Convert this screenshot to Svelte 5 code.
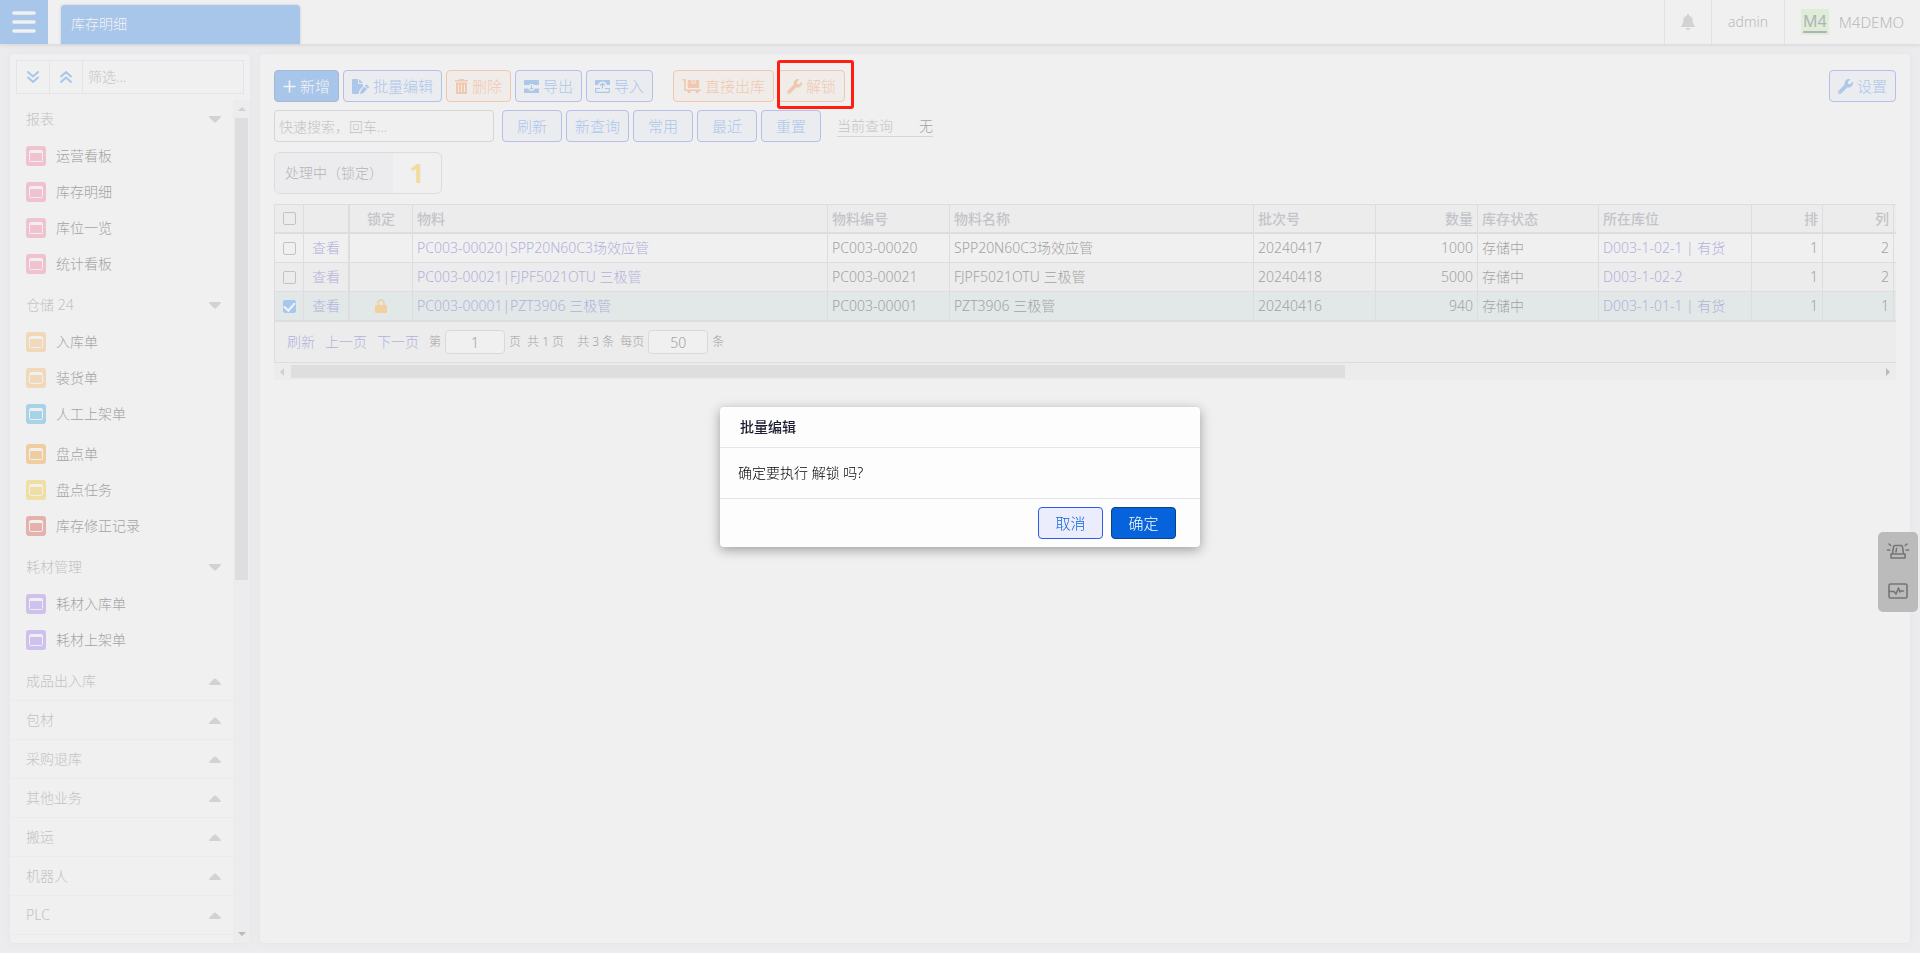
<script>
  const menu = [
    {
      title: '报表',
      blocks: [
        [
          { name: '运营看板', color: '#f0c2d0' },
          { name: '库存明细', color: '#f0c2d0' },
          { name: '库位一览', color: '#f0c2d0' },
          { name: '统计看板', color: '#f0c2d0' },
        ],
      ],
    },
    {
      title: '仓储 24',
      blocks: [
        [
          { name: '入库单', color: '#f1d8b9' },
          { name: '装货单', color: '#f1d8b9' },
          { name: '人工上架单', color: '#a7d3e9' },
        ],
        [
          { name: '盘点单', color: '#f0cda1' },
          { name: '盘点任务', color: '#f0dea2' },
          { name: '库存修正记录', color: '#e4b1ac' },
        ],
      ],
    },
    {
      title: '耗材管理',
      blocks: [
        [
          { name: '耗材入库单', color: '#cfc1ee' },
          { name: '耗材上架单', color: '#cfc1ee' },
        ],
      ],
    },
    { title: '成品出入库' },
    { title: '包材' },
    { title: '采购退库' },
    { title: '其他业务' },
    { title: '搬运' },
    { title: '机器人' },
    { title: 'PLC' },
  ];

  const queries = ['刷新', '新查询', '常用', '最近', '重置'];

  let rows = $state([
    { checked: false, locked: false, code: 'PC003-00020', name: 'SPP20N60C3场效应管', batch: '20240417', qty: 1000, place: 'D003-1-02-1 | 有货', row: 1, col: 2 },
    { checked: false, locked: false, code: 'PC003-00021', name: 'FJPF5021OTU 三极管', batch: '20240418', qty: 5000, place: 'D003-1-02-2', row: 1, col: 2 },
    { checked: true, locked: true, code: 'PC003-00001', name: 'PZT3906 三极管', batch: '20240416', qty: 940, place: 'D003-1-01-1 | 有货', row: 1, col: 1 },
  ]);

  let page = $state('1');
  let pageSize = $state('50');
  let dialogOpen = $state(true);
</script>

{#snippet wrench()}
  <svg width="15" height="15" viewBox="0 0 512 512" fill="currentColor"><path d="M507.73 109.1c-2.24-9.03-13.54-12.09-20.12-5.51l-74.36 74.36-67.88-11.31-11.31-67.88 74.36-74.36c6.62-6.62 3.43-17.9-5.66-20.16-47.38-11.74-99.55.91-136.58 37.93-39.64 39.64-50.55 97.1-34.05 147.2L18.74 402.76c-24.99 24.99-24.99 65.51 0 90.5 24.99 24.99 65.51 24.99 90.5 0l213.21-213.21c50.12 16.71 107.47 5.68 147.37-34.22 37.07-37.07 49.7-89.32 37.91-136.73zM64 472c-13.25 0-24-10.75-24-24 0-13.26 10.75-24 24-24s24 10.74 24 24c0 13.25-10.75 24-24 24z" /></svg>
{/snippet}

<div class="app">
  <header class="topbar">
    <button class="burger" aria-label="菜单">
      <svg width="24" height="22" viewBox="0 0 24 22" fill="none" stroke="#f0f0f0" stroke-width="3.6" stroke-linecap="round"><path d="M2 2h20M2 11h20M2 20h20" /></svg>
    </button>
    <a class="tab" href="#stock">库存明细</a>
    <div class="user">
      <button class="cell" aria-label="通知">
        <svg width="14" height="16" viewBox="0 0 14 16" fill="#d2d2d3"><path d="M7 0c.6 0 1 .4 1 1v.7c2.200.4 3.700 2.200 3.700 4.500 0 3 .9 4.200 1.900 5.200.7.7.3 1.700-.6 1.700H1c-.9 0-1.300-1-.6-1.700 1-1 1.900-2.200 1.900-5.200 0-2.300 1.500-4.100 3.700-4.500V1c0-.6.400-1 1-1zM5 14h4c0 1.200-.9 2-2 2s-2-.8-2-2z" /></svg>
      </button>
      <a class="cell name" href="#admin">admin</a>
      <a class="cell brand" href="#home"><span class="logo">M4</span>M4DEMO</a>
    </div>
  </header>

  <div class="body">
    <aside class="sidebar">
      <div class="filter">
        <button aria-label="全部展开">
          <svg width="14" height="14" viewBox="0 0 14 14" fill="none" stroke="#a8c6ea" stroke-width="2" stroke-linecap="round" stroke-linejoin="round"><path d="M2 2l5 4.500L12 2M2 7.500l5 4.500 5-4.500" /></svg>
        </button>
        <button aria-label="全部收起">
          <svg width="14" height="14" viewBox="0 0 14 14" fill="none" stroke="#a8c6ea" stroke-width="2" stroke-linecap="round" stroke-linejoin="round"><path d="M2 6.500L7 2l5 4.500M2 12l5-4.500 5 4.500" /></svg>
        </button>
        <input type="text" placeholder="筛选..." aria-label="筛选" />
      </div>
      <div class="menu-wrap">
        <nav class="menu">
          {#each menu as group}
            <button class="group" class:closed={!group.blocks}>
              {group.title}
              {#if group.blocks}
                <svg width="12" height="7" viewBox="0 0 12 7" fill="#d2d2d3"><path d="M1 0h10c1 0 1.200 1 .6 1.600L7.200 6c-.7.8-1.700.8-2.400 0L.4 1.600C-.2 1 0 0 1 0z" /></svg>
              {:else}
                <svg width="12" height="7" viewBox="0 0 12 7" fill="#d2d2d3"><path d="M1 7h10c1 0 1.200-1 .6-1.600L7.200 1c-.7-.8-1.700-.8-2.400 0L.4 5.400C-.2 6 0 7 1 7z" /></svg>
              {/if}
            </button>
            {#each group.blocks ?? [] as block}
              <div class="block">
                {#each block as item}
                  <a class="item" href="#{item.name}">
                    <svg width="20" height="20" viewBox="0 0 20 20">
                      <rect width="20" height="20" rx="3" fill={item.color} />
                      <rect x="3.500" y="4.500" width="13" height="11" rx="1" fill="none" stroke="#f0f0f0" />
                      <path d="M4 6h12" stroke="#f0f0f0" stroke-width="2" />
                    </svg>
                    {item.name}
                  </a>
                {/each}
              </div>
            {/each}
          {/each}
        </nav>
        <div class="vscroll">
          <svg width="8" height="4" viewBox="0 0 8 4" fill="#cfcfcf"><path d="M0 4l4-4 4 4z" /></svg>
          <div class="vtrack"><div class="vthumb"></div></div>
          <svg width="8" height="4" viewBox="0 0 8 4" fill="#b9b9b9"><path d="M0 0l4 4 4-4z" /></svg>
        </div>
      </div>
    </aside>

    <main class="content">
      <div class="toolbar">
        <button class="btn primary">
          <svg width="13" height="13" viewBox="0 0 13 13" stroke="currentColor" stroke-width="1.600" stroke-linecap="round"><path d="M6.500 1v11M1 6.500h11" /></svg>
          新增
        </button>
        <button class="btn">
          <svg width="17" height="15" viewBox="0 0 17 15" fill="currentColor"><path d="M1.300 0H6v4.200c0 .5.300.8.800.8H11v2.600L7.500 11l-.8 3.200.2.800H1.300C.5 15 0 14.500 0 13.700V1.300C0 .5.500 0 1.300 0zM7 0l4 4H7zM14.700 5.500l2 2c.4.4.4.800 0 1.200l-.9.9-2.900-2.900.9-.9c.3-.4.600-.5.900-.3zM12.200 7.400l2.900 2.900-4 4-3.100.7.6-3z" /></svg>
          批量编辑
        </button>
        <button class="btn danger">
          <svg width="13" height="15" viewBox="0 0 13 15" fill="currentColor"><path fill-rule="evenodd" d="M4.500 0h4l.6 1H13v1.500H0V1h3.900zM1 3.500h11V14c0 .6-.4 1-1 1H2c-.6 0-1-.4-1-1zM3 5.500v7.500h1V5.500zM6 5.500v7.500h1V5.500zM9 5.500v7.500h1V5.500z" /></svg>
          删除
        </button>
        <button class="btn">
          <svg width="15" height="13" viewBox="0 0 15 13" fill="currentColor"><path d="M1 0h13c.6 0 1 .4 1 1v3.500c0 .3-.2.500-.5.500H10L9 4H6L5 5H.5C.2 5 0 4.800 0 4.500V1c0-.6.400-1 1-1zM.5 8.500H4L6.300 11h2.400L11 8.500h3.500c.3 0 .5.200.5.500v3c0 .6-.4 1-1 1H1c-.6 0-1-.4-1-1V9c0-.3.2-.5.5-.5zM7 5h1v3h1.700L7.500 10 5.300 8H7z" /></svg>
          导出
        </button>
        <button class="btn">
          <svg width="15" height="13" viewBox="0 0 15 13"><path fill="currentColor" d="M1 0h13c.6 0 1 .4 1 1v3.500c0 .3-.2.500-.5.500H12C11.500 3 9.700 1.500 7.500 1.500S3.500 3 3 5H.5C.2 5 0 4.800 0 4.500V1c0-.6.400-1 1-1z" /><path d="M7.500 3.500v5M5.200 5.500l2.300-2.200 2.300 2.200M5 8.500H1.200c-.4 0-.6.200-.6.600v2.700c0 .4.200.6.600.6h12.600c.4 0 .6-.2.600-.6V9.100c0-.4-.2-.6-.6-.6H10" fill="none" stroke="currentColor" stroke-width="1.200" /></svg>
          导入
        </button>
        <button class="btn danger split">
          <svg width="19" height="15" viewBox="0 0 19 15" fill="currentColor"><path d="M.8 0h2.200c.5 0 .8.300.8.800V10.500h14.400c1 0 1 1.500 0 1.500h-1.400a1.600 1.600 0 1 1-3 0H8.600a1.600 1.600 0 1 1-3 0H3c-.5 0-.8-.3-.8-.8V1.500H.8C-.2 1.500-.2 0 .8 0zM6.500 1h3v3.500h4V1h3c.4 0 .7.300.7.700v6.600c0 .4-.3.700-.7.700h-10c-.4 0-.7-.3-.7-.7V1.700c0-.4.300-.7.700-.7zM10.500 1h2v2.500h-2z" /></svg>
          直接出库
        </button>
        <button class="btn danger marked">{@render wrench()}解锁</button>
        <button class="btn settings">{@render wrench()}设置</button>
      </div>

      <div class="toolbar">
        <input class="search" type="text" placeholder="快速搜索，回车..." aria-label="快速搜索" />
        {#each queries as query}
          <button class="btn">{query}</button>
        {/each}
        <div class="current"><span>当前查询</span><b>无</b></div>
      </div>

      <div class="stat">
        <span class="stat-name">处理中（锁定）</span>
        <strong>1</strong>
      </div>

      <div class="grid">
        <table>
          <colgroup>
            <col class="c-check" /><col class="c-view" /><col class="c-lock" /><col /><col class="c-code" /><col class="c-name" />
            <col class="c-code" /><col class="c-qty" /><col class="c-state" /><col class="c-place" /><col class="c-num" /><col class="c-num" /><col class="c-rest" />
          </colgroup>
          <thead>
            <tr>
              <th class="center"><input type="checkbox" aria-label="全选" /></th>
              <th class="thick"></th>
              <th class="center">锁定</th>
              <th>物料</th>
              <th>物料编号</th>
              <th>物料名称</th>
              <th>批次号</th>
              <th class="num">数量</th>
              <th>库存状态</th>
              <th>所在库位</th>
              <th class="num">排</th>
              <th class="num">列</th>
              <th></th>
            </tr>
          </thead>
          <tbody>
            {#each rows as row}
              <tr class:selected={row.checked}>
                <td class="center"><input type="checkbox" bind:checked={row.checked} aria-label={row.code} /></td>
                <td class="center thick"><a href="#{row.code}">查看</a></td>
                <td class="center">
                  {#if row.locked}
                    <svg class="lock" width="12" height="14" viewBox="0 0 12 14"><path d="M3 7V4a3 3 0 0 1 6 0v3" fill="none" stroke="#f0cfa0" stroke-width="1.600" /><rect y="6" width="12" height="8" rx="1" fill="#f0cfa0" /></svg>
                  {/if}
                </td>
                <td><a href="#{row.code}">{row.code}|{row.name}</a></td>
                <td>{row.code}</td>
                <td>{row.name}</td>
                <td>{row.batch}</td>
                <td class="num">{row.qty}</td>
                <td>存储中</td>
                <td><a href="#{row.place}">{row.place}</a></td>
                <td class="num">{row.row}</td>
                <td class="num">{row.col}</td>
                <td></td>
              </tr>
            {/each}
          </tbody>
        </table>
        <div class="pager">
          <a href="#refresh">刷新</a>
          <a href="#prev">上一页</a>
          <a href="#next">下一页</a>
          <label>第<input type="text" bind:value={page} />页</label>
          <span class="total">共 1 页</span>
          <span class="count">共 3 条</span>
          <label class="size">每页<input type="text" bind:value={pageSize} />条</label>
        </div>
      </div>
      <div class="hscroll">
        <svg width="4" height="8" viewBox="0 0 4 8" fill="#cfcfcf"><path d="M4 0L0 4l4 4z" /></svg>
        <div class="htrack"><div class="hthumb"></div></div>
        <svg width="4" height="8" viewBox="0 0 4 8" fill="#b9b9b9"><path d="M0 0l4 4-4 4z" /></svg>
      </div>
    </main>
  </div>

  <div class="float">
    <button aria-label="报警">
      <svg width="24" height="18" viewBox="0 0 24 18" fill="none" stroke="#757575" stroke-width="1.600" stroke-linecap="round" stroke-linejoin="round"><path d="M6.500 11.500L7.500 5c.1-.9.700-1.500 1.500-1.500h6c.8 0 1.400.6 1.500 1.500l1 6.500M5 12h14v4H5zM10.500 6.500L10 10M1.500 8h2.300M20.200 8h2.300M3 2l1.800 1.500M21 2l-1.800 1.500" /></svg>
    </button>
    <button aria-label="监控">
      <svg width="20" height="16" viewBox="0 0 20 16" fill="none" stroke="#757575" stroke-width="1.600" stroke-linecap="round" stroke-linejoin="round"><rect x="1" y="1" width="18" height="14" rx="1.500" /><path d="M1.500 8.500H6l2 2.500 2.500-6L12 9l1-1h2.500" /></svg>
    </button>
  </div>

  {#if dialogOpen}
    <div class="mask">
      <div class="dialog" role="dialog" aria-labelledby="dialog-title">
        <h2 id="dialog-title">批量编辑</h2>
        <p>确定要执行 解锁 吗?</p>
        <footer>
          <button class="cancel" onclick={() => (dialogOpen = false)}>取消</button>
          <button class="ok" onclick={() => (dialogOpen = false)}>确定</button>
        </footer>
      </div>
    </div>
  {/if}
</div>

<style>
  :global(body) {
    margin: 0;
    background: #ecebed;
  }

  .app,
  .app * {
    box-sizing: border-box;
  }

  .app {
    display: flex;
    flex-direction: column;
    height: 100vh;
    overflow: hidden;
    font: 300 14px/20px "Noto Sans", "Noto Sans CJK SC", sans-serif;
    color: #a3a3a3;
  }

  button,
  input {
    font: inherit;
    color: inherit;
    margin: 0;
  }

  button {
    padding: 0;
    border: 0;
    background: none;
    cursor: pointer;
  }

  input {
    min-width: 0;
    outline: none;
  }

  input::placeholder {
    color: #c3c3c3;
    opacity: 1;
  }

  a {
    color: #b3b1dc;
    text-decoration: none;
  }

  svg {
    flex: none;
    display: block;
  }

  .topbar {
    display: flex;
    flex: none;
    height: 44px;
    background: #f0f0f0;
    box-shadow: 0 1px 4px #d3d4d8;
  }

  .burger {
    display: grid;
    place-items: center;
    width: 48px;
    background: #a8c5ea;
  }

  .tab {
    width: 239px;
    margin: 5px 0 0 13px;
    padding: 9px 10px;
    border-radius: 4px 4px 0 0;
    background: #a8c5ea;
    box-shadow: 0 0 3px #c5c9d4;
    color: #f4f4f4;
  }

  .user {
    display: flex;
    margin-left: auto;
  }

  .cell {
    display: flex;
    align-items: center;
    padding: 0 16px;
    border-left: 1px solid #e2e2e4;
    color: #b9b9bb;
    font-size: 15px;
  }

  .name {
    font-size: 14px;
  }

  .brand {
    gap: 10px;
  }

  .logo {
    height: 26px;
    padding: 2px 2px;
    background: #e1ecd7;
    color: #acb4ba;
    font-size: 16px;
    font-weight: 400;
    line-height: 20px;
    text-decoration: underline;
    text-decoration-thickness: 2px;
    text-underline-offset: 4px;
  }

  .body {
    display: flex;
    flex: 1;
    min-height: 0;
    gap: 10px;
    padding: 10px;
  }

  .sidebar,
  .content {
    border-radius: 4px;
    background: #f0f0f0;
    box-shadow: 0 0 6px #e3e4e8;
  }

  .sidebar {
    display: flex;
    flex-direction: column;
    gap: 6px;
    width: 240px;
    padding-top: 6px;
  }

  .filter {
    display: flex;
    flex: none;
    height: 34px;
    margin: 0 6px;
    border: 1px solid #e4e4e6;
  }

  .filter button {
    display: grid;
    place-items: center;
    width: 33px;
    border-right: 1px solid #e4e4e6;
  }

  .filter input {
    flex: 1;
    padding: 0 5px;
    border: 0;
    background: none;
  }

  .menu-wrap {
    display: flex;
    flex: 1;
    min-height: 0;
  }

  .menu {
    flex: 1;
    overflow: hidden;
  }

  .group {
    display: flex;
    align-items: center;
    justify-content: space-between;
    width: 100%;
    height: 38px;
    padding: 0 12px 0 16px;
    color: #c3c3c3;
  }

  .group.closed {
    height: 39px;
    border-bottom: 1px solid #ebebec;
  }

  .block {
    padding-bottom: 4px;
  }

  .item {
    display: flex;
    align-items: center;
    gap: 10px;
    height: 36px;
    padding-left: 16px;
    color: #a3a3a3;
  }

  .vscroll {
    display: flex;
    flex-direction: column;
    align-items: center;
    gap: 7px;
    width: 17px;
    padding: 7px 0;
    background: #ececec;
  }

  .vtrack {
    flex: 1;
    width: 13px;
  }

  .vthumb {
    height: 57.3%;
    background: #dedede;
  }

  .content {
    flex: 1;
    min-width: 0;
    padding: 16px 14px;
  }

  .toolbar {
    display: flex;
    gap: 4px;
    margin-bottom: 8px;
  }

  .btn {
    position: relative;
    display: flex;
    align-items: center;
    justify-content: center;
    gap: 4px;
    min-width: 60px;
    height: 32px;
    padding: 0 8px;
    border: 1px solid #b5bfea;
    border-radius: 4px;
    background: #ebecf0;
    color: #abc7ea;
    font-size: 15px;
    white-space: nowrap;
  }

  .primary {
    border-color: #a5b8d0;
    background: #a8c5ea;
    color: #f4f4f4;
  }

  .danger {
    border-color: #f0c8b0;
    background: #f0ece9;
    color: #f0c8b0;
  }

  .split {
    margin-left: 16px;
  }

  .settings {
    margin-left: auto;
  }

  .marked::after {
    content: '';
    position: absolute;
    inset: -11px -10px -8px -2px;
    border: 3px solid #ff1e12;
    border-radius: 3px;
  }

  .search {
    width: 220px;
    height: 32px;
    margin-right: 4px;
    padding: 0 4px;
    border: 1px solid #d5d5d5;
    border-radius: 4px;
    background: none;
  }

  .current {
    display: flex;
    align-self: center;
    gap: 26px;
    margin-left: 12px;
    border-bottom: 1px solid #d5d5d5;
    color: #c3c3c3;
  }

  .current b {
    color: #a3a3a3;
    font-weight: 300;
  }

  .stat {
    display: inline-flex;
    height: 42px;
    margin: 2px 0 10px;
    border: 1px solid #dcdcde;
    border-radius: 6px;
    line-height: 40px;
    vertical-align: top;
  }

  .stat-name {
    width: 118px;
    padding-left: 10px;
    border-radius: 5px 0 0 5px;
    background: #ececef;
    color: #b5b5b5;
    white-space: nowrap;
  }

  .stat strong {
    width: 48px;
    color: #f0dca0;
    font-size: 26px;
    font-weight: 700;
    text-align: center;
  }

  .grid {
    border: 1px solid #dddde1;
    border-right: 0;
    background: #ececec;
  }

  table {
    width: 100%;
    border-collapse: separate;
    border-spacing: 0;
    table-layout: fixed;
  }

  .c-check { width: 29px; }
  .c-view { width: 46px; }
  .c-lock { width: 63px; }
  .c-code { width: 122px; }
  .c-name { width: 304px; }
  .c-qty { width: 102px; }
  .c-state { width: 121px; }
  .c-place { width: 153px; }
  .c-num { width: 71px; }
  .c-rest { width: 2px; }

  th,
  td {
    height: 29px;
    padding: 0 4px;
    border-right: 1px solid #dddde1;
    border-bottom: 1px solid #dddde1;
    text-align: left;
    white-space: nowrap;
  }

  th {
    border-bottom-width: 2px;
    color: #c3c4c9;
    font-weight: 500;
  }

  th:last-child,
  td:last-child {
    padding: 0;
    border-right: 0;
  }

  tbody tr:nth-child(odd) {
    background: #f0f0f0;
  }

  tbody tr.selected {
    background: #e1e8e7;
  }

  tbody tr:last-child td {
    height: 30px;
    border-bottom-width: 2px;
  }

  .center {
    padding: 0;
    text-align: center;
  }

  .thick {
    border-right-width: 2px;
  }

  .num {
    text-align: right;
  }

  .lock {
    margin: 0 auto;
  }

  input[type='checkbox'] {
    display: block;
    width: 13px;
    height: 13px;
    margin: 0 auto;
    border: 1px solid #c3c3c3;
    border-radius: 2px;
    appearance: none;
  }

  input[type='checkbox']:checked {
    display: grid;
    place-items: center;
    border-color: #a5c7f1;
    background: #a5c7f1;
  }

  input[type='checkbox']:checked::after {
    content: '';
    width: 5px;
    height: 9px;
    margin-top: -2px;
    border: solid #f4f4f4;
    border-width: 0 2px 2px 0;
    transform: rotate(42deg);
  }

  .pager {
    display: flex;
    align-items: center;
    gap: 10px;
    height: 40px;
    padding-left: 12px;
    color: #a3a3a3;
    font-size: 12px;
  }

  .pager a {
    font-size: 14px;
  }

  .pager label {
    display: flex;
    align-items: center;
    gap: 4px;
  }

  .pager input {
    width: 60px;
    height: 24px;
    padding: 0;
    border: 1px solid #d9d9dc;
    border-radius: 4px;
    background: #f0f0f0;
    font-size: 14px;
    text-align: center;
  }

  .pager .total,
  .pager .size {
    margin-left: -4px;
  }

  .pager .count {
    margin-left: 3px;
  }

  .hscroll {
    display: flex;
    align-items: center;
    gap: 7px;
    height: 17px;
    padding: 0 6px;
    background: #ececec;
  }

  .htrack {
    flex: 1;
  }

  .hthumb {
    width: 66.4%;
    height: 13px;
    background: #dedede;
  }

  .float {
    position: absolute;
    right: 2px;
    top: 532px;
    display: flex;
    flex-direction: column;
    width: 40px;
    border-radius: 5px;
    background: #bbbbbb;
  }

  .float button {
    display: grid;
    place-items: center;
    height: 40px;
    padding-bottom: 2px;
  }

  .mask {
    position: fixed;
    inset: 0;
    display: grid;
    place-items: center;
  }

  .dialog {
    width: 480px;
    border-radius: 4px;
    background: #fdfdfd;
    box-shadow: 0 3px 12px rgba(0, 0, 0, 0.35);
    color: #000;
  }

  .dialog h2 {
    margin: 0;
    padding: 10px 20px;
    border-bottom: 1px solid #e6e6e8;
    color: #1c1c30;
    font-size: 14px;
    line-height: 20px;
    font-weight: 500;
  }

  .dialog p {
    margin: 0;
    padding: 15px 18px;
    border-bottom: 1px solid #e6e6e8;
  }

  .dialog footer {
    display: flex;
    justify-content: flex-end;
    gap: 8px;
    padding: 8px 24px;
  }

  .cancel,
  .ok {
    width: 65px;
    height: 32px;
    border: 1px solid #2f5be8;
    border-radius: 4px;
    background: #ecedfc;
    color: #0a63dc;
    font-size: 15px;
  }

  .ok {
    border-color: #0b4185;
    background: #0763dc;
    color: #fff;
  }
</style>
